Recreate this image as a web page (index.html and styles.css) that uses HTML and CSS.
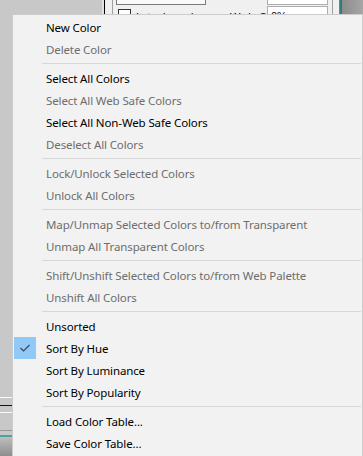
FILE: index.html
```html
<!DOCTYPE html>
<html>
<head>
<meta charset="utf-8">
<link rel="stylesheet" href="styles.css">
</head>
<body>
<div class="backdrop">
  <div class="dlg-edge"></div>
  <div class="dlg-panel">
    <div class="dlg-vline"></div>
    <div class="dlg-box1"></div>
    <div class="dlg-check"></div>
    <span class="dlg-text t1">Interlaced</span>
    <span class="dlg-text t2">Web Snap</span>
    <div class="dlg-box2"></div>
    <div class="dlg-box3"><span class="dlg-val">0%</span></div>
    <div class="dlg-vline2"></div>
  </div>
  <div class="dlg-side"></div>
  <div class="strip-lines">
    <div class="sl white a"></div>
    <div class="sl black b"></div>
    <div class="sl white c"></div>
    <div class="sl gray d"></div>
    <div class="sl teal e"></div>
    <div class="sl-grad"></div>
  </div>
</div>

<div class="menu">
  <div class="item">New Color</div>
  <div class="item off">Delete Color</div>
  <div class="sep"></div>
  <div class="item">Select All Colors</div>
  <div class="item off">Select All Web Safe Colors</div>
  <div class="item">Select All Non-Web Safe Colors</div>
  <div class="item off">Deselect All Colors</div>
  <div class="sep"></div>
  <div class="item off">Lock/Unlock Selected Colors</div>
  <div class="item off">Unlock All Colors</div>
  <div class="sep"></div>
  <div class="item off">Map/Unmap Selected Colors to/from Transparent</div>
  <div class="item off">Unmap All Transparent Colors</div>
  <div class="sep"></div>
  <div class="item off">Shift/Unshift Selected Colors to/from Web Palette</div>
  <div class="item off">Unshift All Colors</div>
  <div class="sep"></div>
  <div class="item">Unsorted</div>
  <div class="item checked"><span class="check"><svg width="22" height="22" viewBox="0 0 22 22"><polyline points="6.5,11 9.5,14 15.5,8" fill="none" stroke="#3b4a5a" stroke-width="1.2"/></svg></span>Sort By Hue</div>
  <div class="item">Sort By Luminance</div>
  <div class="item">Sort By Popularity</div>
  <div class="sep"></div>
  <div class="item">Load Color Table...</div>
  <div class="item">Save Color Table...</div>
</div>
</body>
</html>
```
FILE: styles.css
```css
html, body {
  margin: 0;
  padding: 0;
}
body {
  width: 363px;
  height: 456px;
  overflow: hidden;
  position: relative;
  background: #c8c8c8;
  font-family: "Noto Sans", "Open Sans", sans-serif;
  font-size: 11.5px;
  letter-spacing: -0.12px;
}
.backdrop {
  position: absolute;
  inset: 0;
}
.dlg-edge {
  position: absolute;
  left: 102px;
  top: 0;
  width: 2px;
  height: 14px;
  background: #e2e2e2;
  border-right: 1px solid #000;
}
.dlg-panel {
  position: absolute;
  left: 105px;
  top: 0;
  width: 236px;
  height: 14px;
  background: #f0f0f0;
  overflow: hidden;
}
.dlg-vline {
  position: absolute;
  left: 7px;
  top: 0;
  width: 1px;
  height: 14px;
  background: #a0a0a0;
}
.dlg-box1 {
  position: absolute;
  left: 11px;
  top: -10px;
  width: 88px;
  height: 13px;
  background: #fafafa;
  border: 1px solid #7a7a7a;
}
.dlg-check {
  position: absolute;
  left: 13px;
  top: 9px;
  width: 11px;
  height: 11px;
  background: #fff;
  border: 1px solid #333;
}
.dlg-text {
  position: absolute;
  top: 11px;
  font-family: "Liberation Sans", sans-serif;
  font-size: 11px;
  letter-spacing: 1px;
  color: #000;
  line-height: 13px;
}
.t1 { left: 31px; }
.t2 { left: 125px; }
.dlg-box2 {
  position: absolute;
  left: 162px;
  top: -10px;
  width: 59px;
  height: 13px;
  background: #fff;
  border: 1px solid #adadad;
}
.dlg-box3 {
  position: absolute;
  left: 162px;
  top: 6px;
  width: 59px;
  height: 16px;
  background: #fff;
  border: 1px solid #adadad;
}
.dlg-val {
  position: absolute;
  left: 3px;
  top: 3px;
  font-family: "Liberation Sans", sans-serif;
  font-size: 11px;
  line-height: 13px;
}
.dlg-vline2 {
  position: absolute;
  left: 227px;
  top: 0;
  width: 1px;
  height: 14px;
  background: #a0a0a0;
}
.dlg-side {
  position: absolute;
  left: 339px;
  top: 0;
  width: 24px;
  height: 14px;
  background: linear-gradient(to right, #5a8f8c 0 1px, #2f7d78 1px 3px, #8c8c8c 3px, #a6a6a6);
}
.strip-lines {
  position: absolute;
  left: 0;
  top: 396px;
  width: 12px;
  height: 60px;
}
.sl {
  position: absolute;
  left: 0;
  width: 12px;
  height: 1px;
}
.white { background: #fafafa; }
.black { background: #111; }
.gray { background: #9a9a9a; }
.teal { background: #4aa3a0; height: 2px; }
.a { top: 1px; }
.b { top: 9px; }
.c { top: 16px; }
.d { top: 34px; }
.e { top: 39px; }
.sl-grad {
  position: absolute;
  left: 0;
  top: 41px;
  width: 12px;
  height: 19px;
  background: linear-gradient(to bottom, #bdbdbd, #8e8e8e);
}
.menu {
  position: absolute;
  left: 12px;
  top: 14px;
  width: 351px;
  box-sizing: border-box;
  background: #f2f2f2;
  border: 1px solid #cccccc;
  padding: 1px 0 4px;
}
.item {
  height: 22px;
  line-height: 23px;
  padding-left: 33px;
  color: #000;
  position: relative;
  white-space: nowrap;
}
.item.off {
  color: #6d6d6d;
}
.check {
  position: absolute;
  left: 1px;
  top: 0;
  width: 22px;
  height: 22px;
  background: #90c8f6;
}
.check svg {
  display: block;
}
.sep {
  height: 7px;
  position: relative;
}
.sep::after {
  content: "";
  position: absolute;
  left: 29px;
  right: 1px;
  top: 3px;
  height: 1px;
  background: #d7d7d7;
}
```
